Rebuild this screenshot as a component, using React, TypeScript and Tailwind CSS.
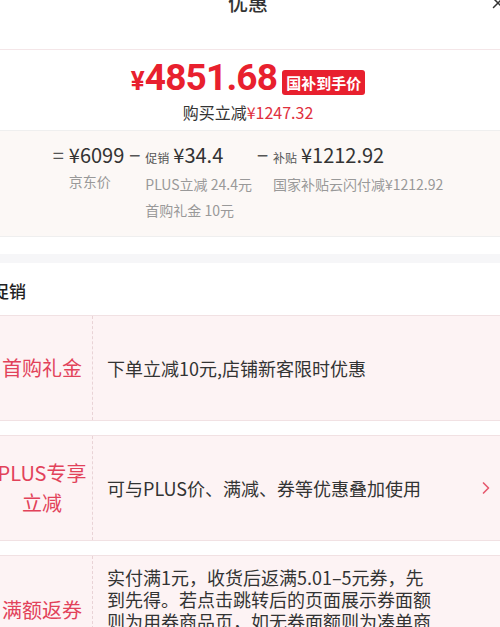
import React from 'react';
import { X, ChevronRight } from 'lucide-react';

// 价格明细列
interface BreakdownCol {
  op: string;
  label?: string;
  amount: string;
  details: string[];
}

const cols: BreakdownCol[] = [
  { op: '=', amount: '¥6099', details: ['京东价'] },
  { op: '−', label: '促销', amount: '¥34.4', details: ['PLUS立减 24.4元', '首购礼金 10元'] },
  { op: '−', label: '补贴', amount: '¥1212.92', details: ['国家补贴云闪付减¥1212.92'] },
];

// 促销条目
interface Promo {
  label: string[];
  lines: string[];
  arrow?: boolean;
}

const promos: Promo[] = [
  { label: ['首购礼金'], lines: ['下单立减10元,店铺新客限时优惠'] },
  { label: ['PLUS专享', '立减'], lines: ['可与PLUS价、满减、券等优惠叠加使用'], arrow: true },
  {
    label: ['满额返券'],
    lines: [
      '实付满1元，收货后返满5.01–5元券，先',
      '到先得。若点击跳转后的页面展示券面额',
      '则为用券商品页，如无券面额则为凑单商',
      '品页。',
    ],
  },
];

export default function App() {
  return (
    <div className="w-[500px] h-[627px] overflow-hidden bg-white font-['Noto_Sans_CJK_SC',sans-serif]">
      <div className="-mt-[14px] -ml-[14px] w-[524px]">
        {/* 标题栏 */}
        <div className="grid grid-cols-[1fr_auto_1fr] h-[64px] border-b border-[#f4e6e8]">
          <div />
          <div className="text-[20px] leading-[34px] font-medium text-[#333]">优惠</div>
          <div className="flex justify-end pr-[3px] pt-[8px]">
            <X size={18} strokeWidth={2} className="text-[#333]" />
          </div>
        </div>

        {/* 到手价 */}
        <div className="pt-[11px] pb-[7px] flex flex-col items-center">
          <div className="flex items-center h-[40px]">
            <span className="text-[#e8202e] font-['Roboto',sans-serif] font-bold leading-[40px]">
              <span className="text-[26px]">¥</span>
              <span className="text-[37px] tracking-[-0.8px]">4851.68</span>
            </span>
            <span className="ml-[5px] mt-[3px] h-[25px] px-[4px] rounded-[3px] bg-[#e8202e] text-white text-[15px] font-bold leading-[25px]">
              国补到手价
            </span>
          </div>
          <div className="text-[16px] leading-[22px] text-[#333]">
            购买立减<span className="text-[#e0303e]">¥1247.32</span>
          </div>
        </div>

        {/* 价格明细 */}
        <div className="border-t border-b border-[#efefef] bg-[#fcf8f6] pt-[11px] pb-[13px] flex justify-center gap-[5px]">
          {cols.map((c, i) => (
            <div key={i} className="flex">
              <span className="text-[20px] leading-[26px] text-[#555] w-[10px] mr-[6px] text-center">{c.op}</span>
              <div>
                <div className="flex items-baseline leading-[26px] text-[#333]">
                  {c.label && <span className="text-[12px] text-[#555] mr-[4px]">{c.label}</span>}
                  <span className="text-[20px]">{c.amount}</span>
                </div>
                {c.details.map((d) => (
                  <div key={d} className="text-[14px] leading-[26px] text-[#999] whitespace-nowrap">
                    {d}
                  </div>
                ))}
              </div>
            </div>
          ))}
        </div>

        <div className="h-[17px]" />
        <div className="h-[9px] bg-[#f6f6f8]" />

        {/* 促销 */}
        <div className="pl-[6px]">
          <div className="pt-[16px] pb-[12px] text-[17px] leading-[24px] font-medium text-[#222]">促销</div>
          <div className="flex flex-col gap-[14px]">
            {promos.map((p, i) => (
              <div
                key={i}
                className="flex min-h-[106px] bg-[#fdf3f4] border-t border-b border-[#f1e1e3]"
              >
                <div className="w-[101px] shrink-0 border-r border-dashed border-[#e9d3d6] flex flex-col items-center justify-center text-[20px] leading-[30px] text-[#e2425a]">
                  {p.label.map((l) => (
                    <span key={l}>{l}</span>
                  ))}
                </div>
                <div className="flex-1 flex items-center pl-[14px] py-[10px]">
                  <div className="text-[18px] leading-[22px] text-[#333] whitespace-nowrap">
                    {p.lines.map((l) => (
                      <div key={l}>{l}</div>
                    ))}
                  </div>
                </div>
                {p.arrow && (
                  <div className="flex items-center pr-[14px]">
                    <ChevronRight size={20} strokeWidth={2} className="text-[#e65a6e]" />
                  </div>
                )}
              </div>
            ))}
          </div>
        </div>
      </div>
    </div>
  );
}
